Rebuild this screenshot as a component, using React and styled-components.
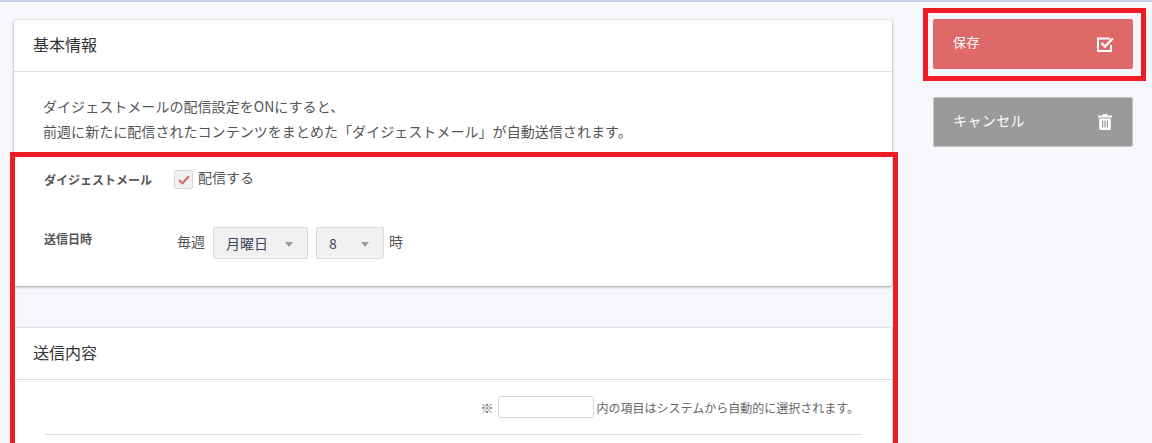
import React from 'react'
import styled, { createGlobalStyle } from 'styled-components'

const GlobalStyle = createGlobalStyle`
  html, body { margin: 0; padding: 0; height: 100%; overflow: hidden; }
  body { background: #f5f7fb; font-family: "Noto Sans CJK JP", "Noto Sans", sans-serif; color: #555; }
`

const Page = styled.div`
  position: relative;
  width: 1152px;
  height: 443px;
  overflow: hidden;
  box-sizing: border-box;
  border-top: 2px solid #c3cfe2;
  display: flex;
  align-items: flex-start;
  padding: 18px 0 0 14px;
`

const Main = styled.div`
  width: 878px;
  display: flex;
  flex-direction: column;
  gap: 42px;
  flex: none;
`

const Card = styled.section`
  background: #fff;
  border-radius: ${p => (p.$square ? 0 : 2)}px;
  box-shadow: 0 1px 3px rgba(0, 0, 0, 0.35), 0 0 1px rgba(0, 0, 0, 0.2);
`

const CardTitle = styled.h2`
  margin: 0;
  height: 52px;
  box-sizing: border-box;
  padding-left: 19px;
  border-bottom: 1px solid #dedede;
  font-size: 16px;
  font-weight: 400;
  line-height: 49px;
  color: #333;
`

const Intro = styled.div`
  padding: 22px 29px 0;
  font-size: 14px;
  line-height: 25px;
  letter-spacing: 0.05px;
  color: #555;
  height: 89px;
  box-sizing: border-box;
`

const Row = styled.div`
  display: flex;
  align-items: flex-start;
  padding-left: 30px;
  height: ${p => p.$height}px;
`

const RowLabel = styled.div`
  width: 130px;
  flex: none;
  font-size: 12px;
  font-weight: 700;
  line-height: 18px;
  color: #555;
  padding-top: 10px;
`

const CheckLabel = styled.label`
  display: flex;
  align-items: flex-start;
  gap: 5px;
  font-size: 14px;
  line-height: 18px;
  color: #555;
  margin-top: 9px;
`

const CheckBox = styled.span`
  width: 19px;
  height: 19px;
  box-sizing: border-box;
  display: flex;
  align-items: center;
  justify-content: center;
  background: #f1f1f1;
  border: 1px solid #d8d8d8;
  border-radius: 2px;
`

const CheckText = styled.span`
  margin-top: -2px;
`

const RaisedText = styled.span`
  margin: 0 0 ${p => p.$lift}px ${p => p.$left || 0}px;
`

const Schedule = styled.div`
  display: flex;
  align-items: center;
  gap: 8px;
  font-size: 14px;
  color: #555;
  margin: 7px 0 0 3px;
`

const Select = styled.div`
  width: ${p => p.$width}px;
  height: 32px;
  box-sizing: border-box;
  display: flex;
  align-items: center;
  justify-content: space-between;
  padding: 0 14px 0 12px;
  background: #f1f1f1;
  border: 1px solid #dcdcdc;
  border-radius: 2px;
  font-size: 14px;
  color: #3a4660;
`

const Caret = styled.span`
  width: 0;
  height: 0;
  border-left: 4px solid transparent;
  border-right: 4px solid transparent;
  border-top: 5px solid #999;
  margin-top: 2px;
`

const Note = styled.div`
  margin: 0 30px;
  height: 55px;
  box-sizing: border-box;
  border-bottom: 1px solid #dedede;
  display: flex;
  align-items: center;
  justify-content: flex-end;
  padding-right: 3px;
  font-size: 12px;
  color: #666;
`

const NoteMark = styled.span`
  font-size: 13px;
`

const NoteSwatch = styled.span`
  width: 96px;
  height: 22px;
  box-sizing: border-box;
  border: 1px solid #d8d8d8;
  border-radius: 3px;
  background: #fff;
  margin: 0 3px 0 4px;
`

const Spacer = styled.div`
  height: 80px;
`

const Side = styled.div`
  margin: -1px 0 0 41px;
  width: 200px;
  display: flex;
  flex-direction: column;
  gap: 28px;
  flex: none;
`

const ActionButton = styled.button`
  width: 200px;
  height: 50px;
  box-sizing: border-box;
  display: flex;
  align-items: center;
  justify-content: space-between;
  padding: 0 ${p => p.$right}px 0 19px;
  background: ${p => p.$bg};
  border: 1px solid ${p => p.$line};
  border-radius: 2px;
  color: #fff;
  font-family: inherit;
  font-size: ${p => p.$size}px;
  letter-spacing: ${p => p.$spacing}px;
`

const Marker = styled.div`
  position: absolute;
  box-sizing: border-box;
  border: 5px solid #ee1c25;
  pointer-events: none;
  left: ${p => p.$x}px;
  top: ${p => p.$y}px;
  width: ${p => p.$w}px;
  height: ${p => p.$h}px;
`

function SaveIcon() {
  return (
    <svg width="17" height="15" viewBox="0 0 17 15" fill="none">
      <path d="M14 8V14H1V1.5h12" stroke="#fff" strokeWidth="2" />
      <path d="M4.5 6l3.5 3.5L15.8 1.5" stroke="#fff" strokeWidth="2.4" />
    </svg>
  )
}

function TrashIcon() {
  return (
    <svg width="14" height="16" viewBox="0 0 14 16" fill="#fff">
      <path d="M5 0h4l1 1.5h4V3.4H0V1.5h4z" />
      <path d="M1.2 4.4h11.6V14.4a1.6 1.6 0 0 1-1.6 1.6H2.8a1.6 1.6 0 0 1-1.6-1.6z" />
      <path d="M4 6.5h1.2v7H4zM6.4 6.5h1.2v7H6.4zM8.8 6.5H10v7H8.8z" fill="#9a9a9a" />
    </svg>
  )
}

export default function App() {
  return (
    <Page>
      <GlobalStyle />
      <Main>
        <Card>
          <CardTitle>基本情報</CardTitle>
          <Intro>
            ダイジェストメールの配信設定をONにすると、<br />
            前週に新たに配信されたコンテンツをまとめた「ダイジェストメール」が自動送信されます。
          </Intro>
          <Row $height={59}>
            <RowLabel>ダイジェストメール</RowLabel>
            <CheckLabel>
              <CheckBox>
                <svg width="12" height="10" viewBox="0 0 12 10" fill="none">
                  <path d="M1 5l3.5 3.2L11 1.2" stroke="#e0676a" strokeWidth="2.2" />
                </svg>
              </CheckBox>
              <CheckText>配信する</CheckText>
            </CheckLabel>
          </Row>
          <Row $height={66}>
            <RowLabel>送信日時</RowLabel>
            <Schedule>
              <RaisedText $lift={4}>毎週</RaisedText>
              <Select $width={95}>月曜日<Caret /></Select>
              <Select $width={68}>8<Caret /></Select>
              <RaisedText $lift={4} $left={-3}>時</RaisedText>
            </Schedule>
          </Row>
        </Card>
        <Card $square>
          <CardTitle>送信内容</CardTitle>
          <Note>
            <NoteMark>※</NoteMark><NoteSwatch />内の項目はシステムから自動的に選択されます。
          </Note>
          <Spacer />
        </Card>
      </Main>
      <Side>
        <ActionButton $bg="#df6868" $line="#df6868" $size={13} $spacing={0.5} $right={18}>
          <RaisedText $lift={5}>保存</RaisedText>
          <SaveIcon />
        </ActionButton>
        <ActionButton $bg="#9a9a9a" $line="#c2c2c2" $size={14} $spacing={0.4} $right={20}>
          <RaisedText $lift={4}>キャンセル</RaisedText>
          <TrashIcon />
        </ActionButton>
      </Side>
      <Marker $x={10} $y={150} $w={888} $h={320} />
      <Marker $x={923} $y={6} $w={223} $h={73} />
    </Page>
  )
}
